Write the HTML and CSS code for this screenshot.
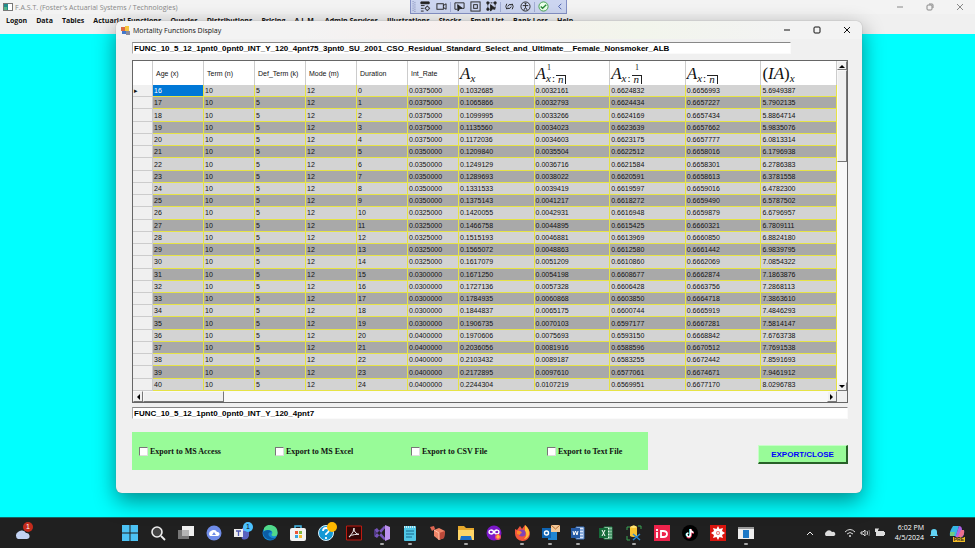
FILE: index.html
```html
<!DOCTYPE html>
<html lang="en">

<head>
  <meta charset="utf-8">
  <meta name="viewport" content="width=device-width, initial-scale=1" />
  <link rel="stylesheet" href="styles.css">
  <title>F.A.S.T. (Foster's Actuarial Systems / Technologies)</title>
</head>

<body>
  <header class="titlebar main-title">
    <svg class="app-icon" viewBox="0 0 10 8"><path fill="#777" d="M0 0h10v8H0z"/><path fill="#fff" d="M5 1h4v6H5z"/><path fill="#238c8c" d="M1 1h4v6H1z"/><path fill="#55b788" d="M1 4h3v3H1z"/></svg>
    <span class="title">F.A.S.T. (Foster's Actuarial Systems / Technologies)</span>
    <div class="window-buttons">
      <button aria-label="Minimize"><svg viewBox="0 0 8 8"><path d="M1 4h6"/></svg></button>
      <button aria-label="Restore"><svg viewBox="0 0 8 8"><rect x="1" y="2" width="5" height="5" rx="1"/><path d="M3 1h3q1 0 1 1v3"/></svg></button>
      <button aria-label="Close"><svg viewBox="0 0 8 8"><path d="m1 1 6 6m0-6-6 6"/></svg></button>
    </div>
  </header>

  <nav class="menu">
    <a href="#">Logon</a>
    <a href="#">Data</a>
    <a href="#">Tables</a>
    <a href="#">Actuarial Functions</a>
    <a href="#">Queries</a>
    <a href="#">Distributions</a>
    <a href="#">Pricing</a>
    <a href="#">A.L.M.</a>
    <a href="#">Admin Services</a>
    <a href="#">Illustrations</a>
    <a href="#">Stocks</a>
    <a href="#">Email List</a>
    <a href="#">Bank Loss</a>
    <a href="#">Help</a>
  </nav>

  <div class="debug-bar">
    <svg class="grip" viewBox="0 0 4 12"><path d="M1 0v12M3 1v11" stroke="#7c86b4" stroke-dasharray="1 1"/></svg>
    <svg viewBox="0 0 12 12"><path d="M1 2h9M1 5h4M1 8h3M1 11h3"/><path d="M1 1h9v2H1z" fill="#222"/><circle cx="8" cy="8" r="2"/><path d="M8 5v1M8 10v1M5 8h1M10 8h1"/></svg>
    <svg viewBox="0 0 12 12"><rect x="1" y="3" width="7" height="6"/><path d="m8 5 3-2v6L8 7"/></svg>
    <i class="split"></i>
    <svg viewBox="0 0 12 12"><path d="M4 9H1V2h10v6H9"/><path fill="#222" d="m4 4 5 4-3 .4L4.400 11z"/></svg>
    <svg viewBox="0 0 12 12"><rect x="1" y="1" width="10" height="10"/><rect x="4" y="4" width="4" height="4"/></svg>
    <svg viewBox="0 0 12 12"><path d="M2 2h8v7H2z" stroke-dasharray="2 1"/><path fill="#222" d="M1 1h2v2H1zM9 1h2v2H9zM1 8h2v2H1zM5 4l5 4-3 .4L5 11z"/></svg>
    <i class="split"></i>
    <svg viewBox="0 0 12 12"><path d="M3 3Q1 6 3 9M9 3q2 3 0 6M8 4Q5 3 4 6M4 8q3 1 4-2"/><path d="M7 4h2M3 8h2"/></svg>
    <svg viewBox="0 0 12 12"><circle cx="6" cy="6" r="5"/><circle cx="6" cy="3" r=".6" fill="#222"/><path d="M3 5h6M6 5v2l-2 3M6 7l2 3"/></svg>
    <i class="split"></i>
    <svg viewBox="0 0 12 12"><circle cx="6" cy="6" r="5" fill="#eaffea" stroke="#3c9d48"/><path d="m3 6 2 2 4-4" stroke="#278837" stroke-width="1.500"/></svg>
    <svg viewBox="0 0 12 12"><path d="M8 3 5 6l3 3" stroke="#4459a8"/></svg>
  </div>

  <main class="desktop"></main>

  <section class="dialog">
    <header class="titlebar">
      <svg class="form-icon" viewBox="0 0 9 9"><path fill="#db6b43" d="M0 1h4v4H0z"/><path fill="#f6c53d" d="M4 0h4v5H4z"/><path fill="#4378cb" d="M1 5h4v3H1z"/><path fill="#8c8c9c" d="M5 5h4v4H5z"/></svg>
      <span class="title">Mortality Functions Display</span>
      <div class="window-buttons">
        <button aria-label="Minimize"><svg viewBox="0 0 8 8"><path d="M1 4h6"/></svg></button>
        <button aria-label="Maximize"><svg viewBox="0 0 8 8"><rect x="1" y="1" width="6" height="6" rx="1"/></svg></button>
        <button aria-label="Close"><svg viewBox="0 0 8 8"><path d="m1 1 6 6m0-6-6 6"/></svg></button>
      </div>
    </header>

    <div class="form">
      <input class="field field-name" type="text" aria-label="Function name" value="FUNC_10_5_12_1pnt0_0pnt0_INT_Y_120_4pnt75_3pnt0_SU_2001_CSO_Residual_Standard_Select_and_Ultimate__Female_Nonsmoker_ALB">

      <div class="grid">
        <table class="values">
          <colgroup>
            <col class="col-row">
            <col class="col-key" span="6">
            <col span="5">
          </colgroup>
          <thead>
            <tr>
              <th></th>
              <th>Age (x)</th>
              <th>Term (n)</th>
              <th>Def_Term (k)</th>
              <th>Mode (m)</th>
              <th>Duration</th>
              <th>Int_Rate</th>
              <th class="math"><span class="formula">A<span class="scripts"><span class="low">x</span></span></span></th>
              <th class="math"><span class="formula">A<span class="scripts"><span class="up">1</span><span class="low">x<b>:</b><span class="angle">n</span></span></span></span></th>
              <th class="math"><span class="formula">A<span class="scripts"><span class="up up-end">1</span><span class="low">x<b>:</b><span class="angle">n</span></span></span></span></th>
              <th class="math"><span class="formula">A<span class="scripts"><span class="low">x<b>:</b><span class="angle">n</span></span></span></span></th>
              <th class="math"><span class="formula"><b>(</b>IA<b>)</b><span class="scripts"><span class="low">x</span></span></span></th>
            </tr>
          </thead>
          <tbody id="rows">
            <!-- Rows are populated in JavaScript -->
          </tbody>
        </table>
        <div class="scroll scroll-v">
          <button aria-label="Scroll up"><svg viewBox="0 0 6 6"><path d="M0 5l3-3 3 3z"/></svg></button>
          <div class="thumb"></div>
          <button class="end" aria-label="Scroll down"><svg viewBox="0 0 6 6"><path d="M0 1l3 3 3-3z"/></svg></button>
        </div>
        <div class="scroll scroll-h">
          <button aria-label="Scroll left"><svg viewBox="0 0 6 6"><path d="M5 0L2 3l3 3z"/></svg></button>
          <div class="thumb"></div>
          <button class="end" aria-label="Scroll right"><svg viewBox="0 0 6 6"><path d="M1 0l3 3-3 3z"/></svg></button>
        </div>
      </div>

      <input class="field" type="text" aria-label="Export name" value="FUNC_10_5_12_1pnt0_0pnt0_INT_Y_120_4pnt7">

      <div class="actions">
        <div class="exports">
          <label><input type="checkbox">Export to MS Access</label>
          <label><input type="checkbox">Export to MS Excel</label>
          <label><input type="checkbox">Export to CSV File</label>
          <label><input type="checkbox">Export to Text File</label>
        </div>
        <button class="export-close">EXPORT/CLOSE</button>
      </div>
    </div>
  </section>

  <footer class="taskbar">
    <a class="task weather" href="#" aria-label="Weather">
      <svg viewBox="0 0 16 16"><path fill="#c3d3f3" d="M4 14a4 4 0 0 1 0-7 5 5 0 0 1 8 1 3 3 0 0 1 1 6z"/></svg>
      <span class="badge red">1</span>
    </a>
    <div class="tasks">
      <a class="task" href="#" aria-label="Start"><svg viewBox="0 0 16 16"><path fill="#4cc2f4" d="M0 0h7.500v7.500H0zM8.500 0H16v7.500H8.500zM0 8.500h7.500V16H0zM8.500 8.500H16V16H8.500z"/></svg></a>
      <a class="task" href="#" aria-label="Search"><svg viewBox="0 0 16 16"><circle cx="7" cy="7" r="5" fill="#444" stroke="#eee" stroke-width="1.600"/><path d="m11 11 4 4" stroke="#eee" stroke-width="1.800"/></svg></a>
      <a class="task" href="#" aria-label="Task view"><svg viewBox="0 0 16 16"><path fill="#777" d="M0 5h11v9H0z"/><path fill="#eee" d="M4 1h12v10H4z"/><path fill="#b5b5b5" d="M4 5h7v6H4z"/></svg></a>
      <a class="task" href="#" aria-label="Cloud"><svg viewBox="0 0 16 16"><circle cx="8" cy="8" r="7.500" fill="#6f8ce8"/><path fill="#fff" d="M4 11a3 3 0 0 1 1-5 4 4 0 0 1 6 1 2 2 0 0 1 1 4z"/><path d="m6 10 2-3 2 3z" fill="#6f8ce8"/></svg></a>
      <a class="task" href="#" aria-label="Teams"><svg viewBox="0 0 16 16"><circle cx="11" cy="5" r="3" fill="#858bea"/><path fill="#5962bd" d="M6 6h9v5q-2 5-7 3z"/><path fill="#eee" d="M0 4h9v8H0z"/><path d="M2 6h5M4.500 6v5" stroke="#5059b0" stroke-width="1.300"/></svg><span class="badge blue">1</span></a>
      <a class="task" href="#" aria-label="Edge"><svg viewBox="0 0 16 16"><circle cx="8" cy="8" r="7.500" fill="#1689d4"/><path fill="#50d98b" d="M2 3a7.500 7.500 0 0 1 13.500 5q0 4-5 3-2-1 0-3-1-5-8.500-2z"/><path fill="#0b5da5" d="M1 7q5-4 9 0-5 0-3 4 3 3 7 2a8 8 0 0 1-13-6"/></svg></a>
      <a class="task" href="#" aria-label="Store"><svg viewBox="0 0 16 16"><path d="M5 4V1h6v3" fill="none" stroke="#46b9e9" stroke-width="1.500"/><rect y="3" width="16" height="13" rx="2" fill="#f3f3f3"/><path fill="#ec5535" d="M5 6h3v3H5z"/><path fill="#82b942" d="M9 6h3v3H9z"/><path fill="#33a5df" d="M5 10h3v3H5z"/><path fill="#f5ba2d" d="M9 10h3v3H9z"/></svg></a>
      <a class="task" href="#" aria-label="Get Help"><svg viewBox="0 0 16 16"><circle cx="8" cy="8" r="7.500" fill="#1599d5" stroke="#d9f3ff"/><path d="M5 6q0-3 3-3t3 2q0 2-3 4v1M8 12v2" fill="none" stroke="#fff" stroke-width="1.800"/></svg><span class="badge yellow"></span></a>
      <a class="task" href="#" aria-label="Acrobat"><svg viewBox="0 0 16 16"><path fill="#310706" stroke="#bd1b11" d="M.5 1h15v14H.5z"/><path d="M8 3q0 4-4 8 0 1-1 1 0-2 10-3 0 1-2 0-4-3-3-6" fill="none" stroke="#eee"/></svg></a>
      <a class="task open" href="#" aria-label="Visual Studio"><svg viewBox="0 0 16 16"><path fill="#7654ba" d="M0 5l3-2 9 11-2 1zM0 11l3 2 9-11-2-1z"/><path fill="#bd91ef" d="m11 0 5 2v12l-5 2z"/><path fill="#4d377f" d="M0 5l2 1v4l-2 1z"/></svg></a>
      <a class="task open" href="#" aria-label="Notepad"><svg viewBox="0 0 16 16"><rect x="2" y="1" width="12" height="15" rx="1" fill="#50c7e7"/><path d="M2 2h12" stroke="#c7edf6" stroke-width="2" stroke-dasharray="1 1"/><path d="M4 6h8M4 9h8M4 12h6" stroke="#16678b"/></svg></a>
      <a class="task" href="#" aria-label="Package tool"><svg viewBox="0 0 16 16"><path fill="#f08568" d="M4 5l5-2 6 3-1 7-5 2-5-4z"/><path fill="#bd4939" d="m9 8 6-2-1 7-5 2z"/><path fill="#df6552" d="m0 2 4-1 1 3-3 2z"/><path d="m4 5 5 3v7" fill="none" stroke="#ffc0a8"/></svg></a>
      <a class="task open" href="#" aria-label="File Explorer"><svg viewBox="0 0 16 16"><path fill="#e5a82c" d="M0 1h6l2 2h8v12H0z"/><path fill="#ffd668" d="M0 5h16v10H0z"/><path fill="#1d70c9" d="M3 11h10l1 4H2z"/></svg></a>
      <a class="task" href="#" aria-label="Infinity"><svg viewBox="0 0 16 16"><circle cx="8" cy="8" r="7.500" fill="#7b18c8"/><path d="M8 7c-2-3-5-2-5 0s3 3 5 0 5-2 5 0-3 3-5 0" fill="none" stroke="#fff" stroke-width="1.500"/><circle cx="12" cy="12" r="3" fill="#ed496d"/><path d="M12 9l2 3-2 2-2-2z" fill="#ffb53d"/></svg></a>
      <a class="task open" href="#" aria-label="Firefox"><svg viewBox="0 0 16 16"><path fill="#f2553c" d="M1 4l2 1 3-4 2 3 3-4q5 4 5 9a7 7 0 0 1-15-1z"/><path fill="#ffba35" d="M11 0q5 4 4 10-2 4-5 4 4-4 1-8z"/><circle cx="8" cy="8" r="3.500" fill="#8044b8"/><path fill="#ff8b28" d="M3 6q4-1 5 2-2 0-2 2l-3-1z"/></svg></a>
      <a class="task open" href="#" aria-label="Outlook"><svg class="wide" viewBox="0 0 18 16"><path fill="#2086d2" d="M6 3h9v12H6z"/><path fill="#0f64b2" d="M0 3h9v10H0z"/><circle cx="4.500" cy="8" r="2" fill="none" stroke="#fff" stroke-width="1.400"/><path fill="#f3c999" d="M9 0h9v7H9z"/><path d="m9 0 4.500 4L18 0" fill="none" stroke="#b66e32"/></svg></a>
      <a class="task open" href="#" aria-label="Word"><svg viewBox="0 0 16 16"><path fill="#d8e6fa" stroke="#3b72be" d="M6 2h8v12H6z"/><path d="M9 5h4M9 8h4M9 11h4" stroke="#3b72be"/><path fill="#255aa5" d="M1 3h9v10H1z"/><path d="m3 6 1 4 1.500-4L7 10l1-4" fill="none" stroke="#fff"/></svg></a>
      <a class="task" href="#" aria-label="Excel"><svg viewBox="0 0 16 16"><path fill="#e5f4e9" stroke="#23814b" d="M6 2h8v12H6z"/><path d="M9 5h5M9 8h5M9 11h5M12 2v12" stroke="#23814b"/><path fill="#176b3a" d="M1 3h9v10H1z"/><path d="m4 5 3 6m0-6-3 6" stroke="#fff"/></svg></a>
      <a class="task open" href="#" aria-label="Database tools"><svg viewBox="0 0 16 16"><path d="M1 5V2h3M12 1h3v3M1 11v4h3" fill="none" stroke="#3ba654"/><path fill="#f5c332" d="M4 2q4-3 7 0v9q-4 2-7 0z"/><path fill="#ffe477" d="M4 2q4-3 7 0-3 2-7 0"/><path d="m7 9 7 6m0-6-7 6" stroke="#2488d2" stroke-width="1.500"/></svg></a>
      <a class="task" href="#" aria-label="iD"><svg viewBox="0 0 16 16"><path fill="#ed234b" d="M0 0h16v16H0z"/><path d="M3 7v6M3 4v2M7 6v6h2q4 0 4-3T9 6z" fill="none" stroke="#fff" stroke-width="1.800"/></svg></a>
      <a class="task" href="#" aria-label="TikTok"><svg viewBox="0 0 16 16"><circle cx="8" cy="8" r="8" fill="#000"/><g fill="none" stroke-width="1.600"><path d="M8 4v6q-1 3-3 1t1-3M8 4q1 3 3 3" stroke="#25e1df"/><path d="M9 4v7q-2 3-4 1M9 5q1 3 3 3" stroke="#ef3157"/><path d="M8.500 4v6q-1 3-3 1t1-3m2-3q1 2 3 2.500" stroke="#fff"/></g></svg></a>
      <a class="task" href="#" aria-label="Mathematica"><svg viewBox="0 0 16 16"><path fill="#d9140d" d="M0 0h16v16H0z"/><path fill="#fff" d="m8 1 1.500 3L13 3l-1 3 3 2-3 2 1 3-3.500-1L8 15l-1.500-3L3 13l1-3-3-2 3-2-1-3 3.500 1z"/><circle cx="8" cy="8" r="2" fill="#e9706b"/><circle cx="8" cy="8" r="1" fill="#fff"/></svg></a>
      <a class="task open" href="#" aria-label="F.A.S.T."><svg viewBox="0 0 16 16"><path fill="#eee" d="M0 2h16v12H0z"/><path fill="#999" d="M0 2h16v2H0z"/><path fill="#1c78c6" d="M5 5h6v8H5z"/></svg></a>
    </div>
    <div class="tray">
      <svg viewBox="0 0 10 10"><path d="m2 7 3-3 3 3" fill="none" stroke="#eee"/></svg>
      <svg class="cloud" viewBox="0 0 12 10"><path fill="#ddd" d="M2 8a2.500 2.500 0 0 1 0-4 3.500 3.500 0 0 1 6 0 2 2 0 0 1 2 4z"/></svg>
      <svg viewBox="0 0 10 10"><path d="M0 4q5-5 10 0M2 6q3-3 6 0" fill="none" stroke="#ddd"/><circle cx="5" cy="8" r="1" fill="#ddd"/></svg>
      <svg viewBox="0 0 10 10"><path d="M1 4h2l2-2v6L3 6H1zM7 3q1 2 0 4" fill="none" stroke="#ddd"/><path d="M9 2q1 3 0 6" fill="none" stroke="#777"/></svg>
      <svg viewBox="0 0 10 10"><path fill="#ddd" d="M1 3h8v5H1zM9 4h1v3H9zM0 1h3v3H0z"/><path d="M1 0v2M3 0v2" stroke="#ddd"/></svg>
      <time class="clock" datetime="2024-04-05T18:02">6:02 PM<br>4/5/2024</time>
      <svg viewBox="0 0 10 10"><path fill="#62d3f5" d="M1 8l1-2V4a3 3 0 0 1 6 0v2l1 2zM4 9h2v1H4z"/></svg>
      <a class="copilot" href="#" aria-label="Copilot preview">
        <svg viewBox="0 0 16 16"><path fill="#36b5e5" d="M4 1h6L7 11H1Q0 7 4 1"/><path fill="#ad62e6" d="M10 1q3 0 3 4h2q1 5-3 8H6z"/><path fill="#70cb80" d="M1 7h5l-1 4H1z"/><path fill="#ed718e" d="M12 5h3q1 5-3 7H9z"/></svg>
        <span class="pre">PRE</span>
      </a>
    </div>
  </footer>

  <script>
    const TERM = 10;
    const DEF_TERM = 5;
    const MODE = 12;
    const FIRST_AGE = 16;

    // [rate, A_x, term insurance, pure endowment, endowment, (IA)_x], by duration
    const values = [
      ["0.0375000", "0.1032685", "0.0032161", "0.6624832", "0.6656993", "5.6949387"],
      ["0.0375000", "0.1065866", "0.0032793", "0.6624434", "0.6657227", "5.7902135"],
      ["0.0375000", "0.1099995", "0.0033266", "0.6624169", "0.6657434", "5.8864714"],
      ["0.0375000", "0.1135560", "0.0034023", "0.6623639", "0.6657662", "5.9835076"],
      ["0.0375000", "0.1172036", "0.0034603", "0.6623175", "0.6657777", "6.0813314"],
      ["0.0350000", "0.1209840", "0.0035504", "0.6622512", "0.6658016", "6.1796938"],
      ["0.0350000", "0.1249129", "0.0036716", "0.6621584", "0.6658301", "6.2786383"],
      ["0.0350000", "0.1289693", "0.0038022", "0.6620591", "0.6658613", "6.3781558"],
      ["0.0350000", "0.1331533", "0.0039419", "0.6619597", "0.6659016", "6.4782300"],
      ["0.0350000", "0.1375143", "0.0041217", "0.6618272", "0.6659490", "6.5787502"],
      ["0.0325000", "0.1420055", "0.0042931", "0.6616948", "0.6659879", "6.6796957"],
      ["0.0325000", "0.1466758", "0.0044895", "0.6615425", "0.6660321", "6.7809111"],
      ["0.0325000", "0.1515193", "0.0046881", "0.6613969", "0.6660850", "6.8824180"],
      ["0.0325000", "0.1565072", "0.0048863", "0.6612580", "0.6661442", "6.9839795"],
      ["0.0325000", "0.1617079", "0.0051209", "0.6610860", "0.6662069", "7.0854322"],
      ["0.0300000", "0.1671250", "0.0054198", "0.6608677", "0.6662874", "7.1863876"],
      ["0.0300000", "0.1727136", "0.0057328", "0.6606428", "0.6663756", "7.2868113"],
      ["0.0300000", "0.1784935", "0.0060868", "0.6603850", "0.6664718", "7.3863610"],
      ["0.0300000", "0.1844837", "0.0065175", "0.6600744", "0.6665919", "7.4846293"],
      ["0.0300000", "0.1906735", "0.0070103", "0.6597177", "0.6667281", "7.5814147"],
      ["0.0400000", "0.1970606", "0.0075693", "0.6593150", "0.6668842", "7.6763738"],
      ["0.0400000", "0.2036056", "0.0081916", "0.6588596", "0.6670512", "7.7691538"],
      ["0.0400000", "0.2103432", "0.0089187", "0.6583255", "0.6672442", "7.8591693"],
      ["0.0400000", "0.2172895", "0.0097610", "0.6577061", "0.6674671", "7.9461912"],
      ["0.0400000", "0.2244304", "0.0107219", "0.6569951", "0.6677170", "8.0296783"],
    ];

    const rows = document.getElementById("rows");

    values.forEach((line, duration) => {
      const row = rows.insertRow();
      const marker = document.createElement("th");
      marker.innerText = duration === 0 ? "\u25B8" : "";
      row.appendChild(marker);
      [FIRST_AGE + duration, TERM, DEF_TERM, MODE, duration, ...line].forEach((value) => {
        row.insertCell().innerText = value;
      });
    });

    rows.rows[0].cells[1].className = "selected";
  </script>
</body>

</html>
```
FILE: styles.css
```css
* {
  box-sizing: border-box;
}

body {
  position: relative;
  display: flex;
  flex-direction: column;
  height: 100vh;
  margin: 0;
  overflow: hidden;
  background-color: #f0f0f0;
  font-family: "Liberation Sans", Arial, sans-serif;
  font-size: 8px;
  color: #111;
}

a {
  color: inherit;
  text-decoration: none;
}

button {
  padding: 0;
  border: 0;
  background: none;
  font: inherit;
}

svg {
  display: block;
}

/* Title bars */

.titlebar {
  display: flex;
  align-items: center;
  font-family: "Open Sans", sans-serif;
  font-size: 7px;
}

.main-title {
  height: 14px;
  padding-left: 3px;
  background-color: #f3f3f3;
  color: #888;
}

.titlebar .title {
  flex: 1;
}

.app-icon {
  width: 10px;
  height: 8px;
  margin-right: 2px;
}

.window-buttons {
  display: flex;
}

.window-buttons button {
  display: flex;
  justify-content: center;
  width: 30px;
  color: inherit;
}

.window-buttons svg {
  width: 8px;
  height: 8px;
  fill: none;
  stroke: currentColor;
}

/* Main menu */

.menu {
  display: flex;
  gap: 9px;
  height: 20px;
  padding: 2px 6px;
  font-family: "Open Sans", sans-serif;
  font-size: 7px;
  font-weight: 700;
  line-height: 10px;
  white-space: nowrap;
}

.debug-bar {
  position: absolute;
  top: 0;
  left: 410px;
  display: flex;
  align-items: center;
  gap: 5px;
  height: 14px;
  padding: 0 1px;
  border: 1px solid #8490c5;
  border-top: 0;
  background-color: #ccd5f0;
}

.debug-bar svg {
  width: 11px;
  height: 11px;
  fill: none;
  stroke: #222;
}

.debug-bar .grip {
  width: 4px;
  margin-right: -1px;
}

.split {
  width: 1px;
  height: 10px;
  margin: 0 -2px;
  background-color: #a1acd3;
}

.desktop {
  flex: 1;
  background-color: #00ffff;
}

/* Child window */

.dialog {
  position: absolute;
  top: 21px;
  right: 113px;
  bottom: 55px;
  left: 116px;
  display: flex;
  flex-direction: column;
  border-radius: 6px;
  background-color: #f0f0f0;
  box-shadow: 0 0 1px #777, 0 8px 22px rgba(0, 0, 0, 0.45);
}

.dialog .titlebar {
  height: 18px;
  padding-left: 5px;
  border-radius: 6px 6px 0 0;
  background: linear-gradient(90deg, #f3f3f3 25%, #f7efed 45%, #f2f5ec 70%, #f3f3f3 90%);
}

.form-icon {
  width: 9px;
  height: 9px;
  margin-right: 3px;
}

.form {
  display: flex;
  flex: 1;
  flex-direction: column;
  min-height: 0;
  padding: 3px 14px 23px 16px;
}

.field {
  flex: none;
  width: 100%;
  height: 12px;
  padding: 0 1px;
  border: 1px solid #fafafa;
  border-top-color: #888;
  border-left-color: #aaa;
  background-color: #fff;
  font: 700 8px "Liberation Sans", Arial, sans-serif;
  color: #000;
}

.field-name {
  width: 92%;
}

/* Values grid */

.grid {
  display: grid;
  flex: 1;
  grid-template-columns: 1fr 10px;
  grid-template-rows: 1fr 11px;
  min-height: 0;
  margin: 6px 0 4px;
  border: 1px solid #666;
  background-color: #f0f0f0;
}

.values {
  width: 100%;
  height: 100%;
  border-collapse: separate;
  border-spacing: 0;
  table-layout: fixed;
  font-size: 7px;
  line-height: 8px;
}

.col-row {
  width: 20px;
}

.col-key {
  width: 51px;
}

.values th,
.values td {
  padding: 1px 1px 0;
  overflow: hidden;
  text-align: left;
  font-weight: 400;
  white-space: nowrap;
}

.values thead th {
  height: 24px;
  padding: 1px 0 0 3px;
  border-right: 1px solid #ccc;
  background-color: #fff;
}

.values thead .math {
  padding: 0 0 0 1px;
}

.values tbody th {
  border-right: 1px solid #ccc;
  border-bottom: 1px solid #ccc;
  background-color: #f0f0f0;
}

.values td {
  border-right: 1px solid #e6e345;
  border-bottom: 1px solid #e6e345;
  background-color: #d3d3d3;
}

.values tr:nth-child(even) td {
  background-color: #a9a9a9;
}

.values tr .selected {
  background-color: #0078d7;
  color: #fff;
}

/* Actuarial symbols */

.formula {
  display: flex;
  align-items: flex-end;
  height: 22px;
  font: italic 17px/20px "Liberation Serif", serif;
}

.formula b {
  font-style: normal;
  font-weight: 400;
}

.scripts {
  display: flex;
  flex-direction: column;
}

.up {
  padding-left: 1px;
  font-size: 8px;
  font-style: normal;
  line-height: 9px;
}

.up-end {
  padding-right: 3px;
  text-align: right;
}

.low {
  display: flex;
  gap: 1px;
  font-size: 11px;
  line-height: 12px;
}

.angle {
  height: 9px;
  margin-top: 3px;
  padding: 0 2px;
  border-top: 1px solid #222;
  border-right: 1px solid #222;
  line-height: 7px;
}

/* Scroll bars */

.scroll {
  display: flex;
  background-color: #f8f8f8;
}

.scroll-v {
  flex-direction: column;
}

.scroll button {
  display: flex;
  flex: none;
  align-items: center;
  justify-content: center;
  width: 10px;
  height: 9px;
  border: 1px solid #f8f8f8;
  border-right-color: #777;
  border-bottom-color: #777;
  background-color: #f0f0f0;
}

.scroll svg {
  width: 6px;
  height: 6px;
}

.scroll .end {
  margin-top: auto;
}

.scroll-h .end {
  margin: 0 0 0 auto;
}

.scroll-h button {
  height: 11px;
}

.thumb {
  border: 1px solid #f8f8f8;
  border-right-color: #777;
  border-bottom-color: #777;
  background-color: #f0f0f0;
}

.scroll-v .thumb {
  height: 28%;
}

.scroll-h .thumb {
  width: 81px;
}

/* Export options */

.actions {
  display: flex;
  align-items: center;
  justify-content: space-between;
  margin-top: 13px;
}

.exports {
  display: grid;
  grid-template-columns: repeat(3, 136px) auto;
  align-items: center;
  width: 72%;
  height: 38px;
  padding-left: 7px;
  background-color: #98fb98;
  font: 700 8px "Liberation Serif", serif;
}

.exports label {
  display: flex;
  align-items: center;
  gap: 2px;
}

.exports input {
  width: 9px;
  height: 9px;
  margin: 0;
  border: 1px solid #ddd;
  border-top-color: #777;
  border-left-color: #777;
  background-color: #fff;
  appearance: none;
}

.export-close {
  width: 90px;
  height: 19px;
  margin-top: 7px;
  border: 1px solid #c6ffc6;
  border-right: 2px solid #286028;
  border-bottom: 2px solid #286028;
  background-color: #98fb98;
  font-weight: 700;
  color: #0000ff;
}

/* Taskbar */

.taskbar {
  display: flex;
  flex: none;
  align-items: center;
  height: 31px;
  padding: 0 10px 0 14px;
  border-top: 1px solid #176262;
  background-color: #202020;
  color: #fff;
}

.tasks {
  display: flex;
  gap: 12px;
  margin-left: 92px;
}

.task {
  position: relative;
  flex: none;
  width: 16px;
}

.task svg {
  width: 16px;
  height: 16px;
}

.task .wide {
  width: 18px;
}

.open::after {
  content: "";
  position: absolute;
  bottom: -4px;
  left: 6px;
  width: 4px;
  height: 2px;
  border-radius: 1px;
  background-color: #aaa;
}

.badge {
  position: absolute;
  top: -3px;
  right: -3px;
  width: 10px;
  height: 10px;
  border-radius: 50%;
  font-size: 7px;
  line-height: 10px;
  text-align: center;
}

.red {
  background-color: #c42b1c;
}

.blue {
  background-color: #4cc2ff;
  color: #111;
}

.yellow {
  background-color: #ffb900;
}

.tray {
  display: flex;
  align-items: center;
  gap: 5px;
  margin-left: auto;
}

.tray svg {
  width: 10px;
  height: 10px;
}

.tray .cloud {
  width: 12px;
  margin: 0 4px;
}

.clock {
  padding-left: 5px;
  font: 7px/10px "Open Sans", sans-serif;
  text-align: right;
}

.copilot {
  position: relative;
  margin-left: 5px;
}

.tray .copilot svg {
  width: 16px;
  height: 16px;
}

.pre {
  position: absolute;
  right: 0;
  bottom: -1px;
  padding: 0 1px;
  background-color: #f4bd25;
  font-size: 5px;
  font-weight: 700;
  line-height: 5px;
  color: #222;
}
```
